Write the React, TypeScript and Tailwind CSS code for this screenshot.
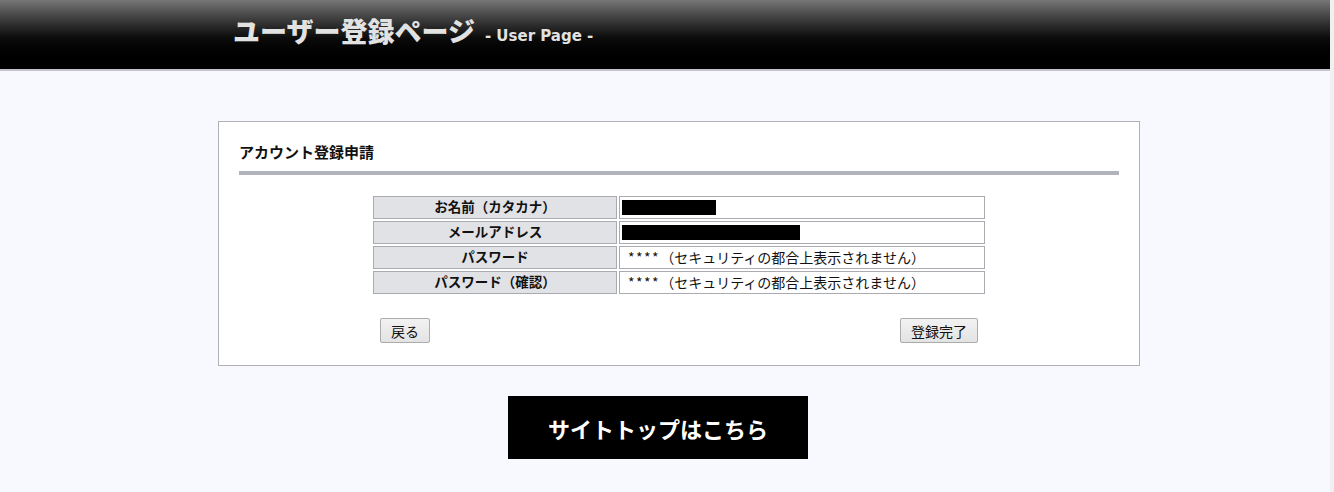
import React from "react";

const font = { fontFamily: '"Noto Sans CJK JP", "Noto Sans", sans-serif' };

function Row({ label, children }: { label: string; children: React.ReactNode }) {
  return (
    <div className="flex gap-[2px]">
      <div className="w-[244px] h-[23px] border border-[#aaabb0] bg-[#e1e2e6] flex items-center justify-center text-[13.5px] font-bold text-[#111] leading-none pb-[1px]">
        {label}
      </div>
      <div className="w-[366px] h-[23px] border border-[#aaabb0] bg-white flex items-center px-[2px] text-[14px] text-[#111] leading-none pb-[1px]">
        {children}
      </div>
    </div>
  );
}

function Btn({ children }: { children: React.ReactNode }) {
  return (
    <button className="h-[25px] px-[10px] border border-[#acacac] rounded-[2px] bg-gradient-to-b from-[#f2f2f2] to-[#e3e3e3] text-[14px] text-[#111] leading-none">
      {children}
    </button>
  );
}

function Hidden() {
  return (
    <span className="pl-[6px]">
      <span className="tracking-[1.5px]">****</span>（セキュリティの都合上表示されません）
    </span>
  );
}

export default function App() {
  return (
    <div className="flex w-[1334px] h-[492px] overflow-hidden" style={font}>
      <div className="w-[1330px] h-full bg-[#f8f8ff] flex flex-col">
        <div className="h-[69px] bg-gradient-to-b from-[#777777] via-[#0c0c0c] via-[55%] to-[#000000] flex items-center pl-[233px] pb-[8px]">
          <span className="text-[27px] font-black text-[#e2e2e2] leading-none">ユーザー登録ページ</span>
          <span
            className="ml-[10px] mt-[11px] text-[15px] font-bold text-[#e2e2e2] leading-none"
            style={{ fontFamily: '"DejaVu Sans", sans-serif' }}
          >
            - User Page -
          </span>
        </div>
        <div className="h-[2px] bg-[#c4c4cc]" />
        <div className="pt-[50px] pl-[218px]">
          <div className="w-[922px] h-[245px] border border-[#b0b0b6] bg-white px-[20px] pt-[22px]">
            <div className="text-[15px] font-bold text-[#111] leading-none h-[16px]">アカウント登録申請</div>
            <div className="mt-[11px] h-[4px] bg-[#b0b3bb]" />
            <div className="mt-[21px] pl-[134px] flex flex-col gap-[2px]">
              <Row label="お名前（カタカナ）">
                <div className="w-[94px] h-[15px] bg-black" />
              </Row>
              <Row label="メールアドレス">
                <div className="w-[178px] h-[15px] bg-black" />
              </Row>
              <Row label="パスワード">
                <Hidden />
              </Row>
              <Row label="パスワード（確認）">
                <Hidden />
              </Row>
            </div>
            <div className="mt-[24px] flex justify-between pl-[141px] pr-[141px]">
              <Btn>戻る</Btn>
              <Btn>登録完了</Btn>
            </div>
          </div>
        </div>
        <div className="pt-[30px] pl-[508px]">
          <div className="w-[300px] h-[63px] bg-black flex items-center justify-center text-white text-[22px] font-bold leading-none">
            サイトトップはこちら
          </div>
        </div>
      </div>
      <div className="w-[4px] h-full bg-[#f0f0f0]" />
    </div>
  );
}
